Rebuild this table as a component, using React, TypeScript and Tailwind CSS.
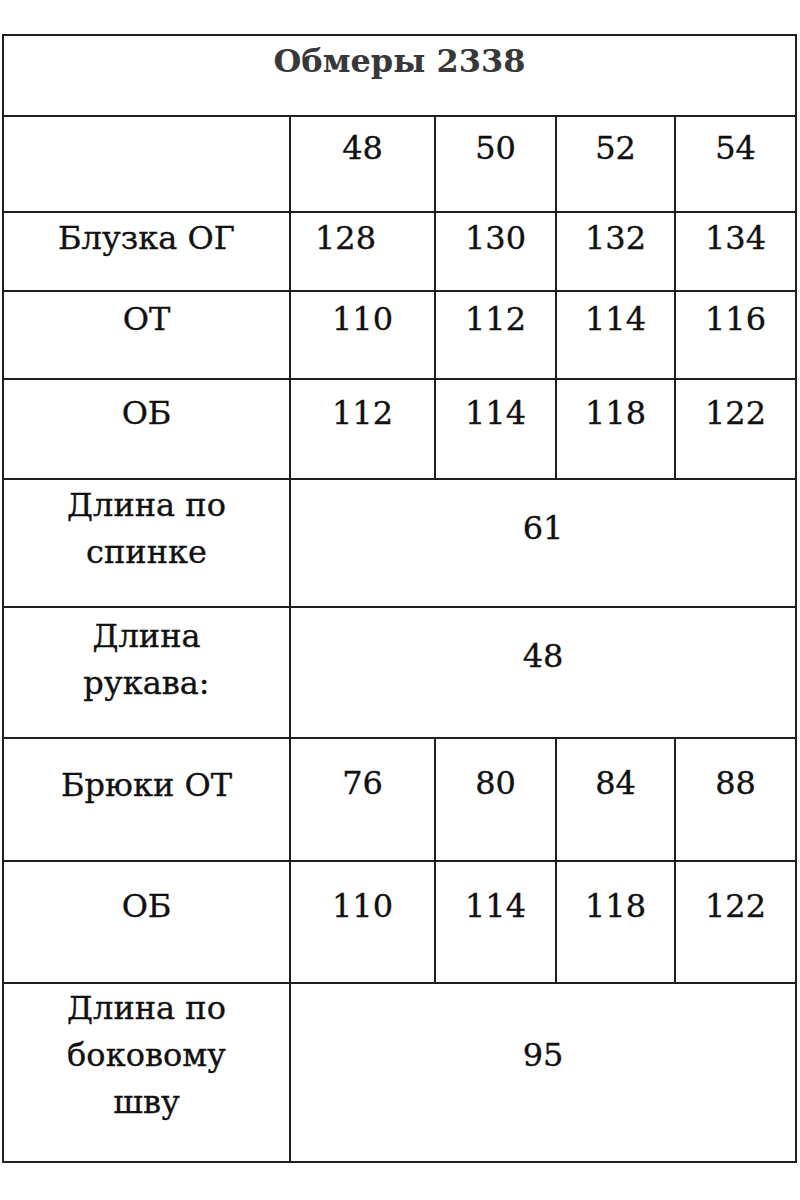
const serif = { fontFamily: '"DejaVu Serif", "Liberation Serif", serif' };

type Row = {
  label: string[];
  values: string[];
  h: string;
  labelPad: string;
  valuePad: string;
  valueClass?: string[];
};

const rows: Row[] = [
  { label: [], values: ["48", "50", "52", "54"], h: "h-[94px]", labelPad: "pt-[8px]", valuePad: "pt-[8px]" },
  { label: ["Блузка ОГ"], values: ["128", "130", "132", "134"], h: "h-[77px]", labelPad: "pt-[2px]", valuePad: "pt-[2px]", valueClass: ["pr-[34px]", "", "", ""] },
  { label: ["ОТ"], values: ["110", "112", "114", "116"], h: "h-[86px]", labelPad: "pt-[4px]", valuePad: "pt-[4px]" },
  { label: ["ОБ"], values: ["112", "114", "118", "122"], h: "h-[98px]", labelPad: "pt-[10px]", valuePad: "pt-[10px]" },
  { label: ["Длина по", "спинке"], values: ["61"], h: "h-[126px]", labelPad: "pt-[2px]", valuePad: "pt-[25px]" },
  { label: ["Длина", "рукава:"], values: ["48"], h: "h-[129px]", labelPad: "pt-[5px]", valuePad: "pt-[25px]" },
  { label: ["Брюки ОТ"], values: ["76", "80", "84", "88"], h: "h-[121px]", labelPad: "pt-[23px]", valuePad: "pt-[21px]" },
  { label: ["ОБ"], values: ["110", "114", "118", "122"], h: "h-[120px]", labelPad: "pt-[21px]", valuePad: "pt-[21px]" },
  { label: ["Длина по", "боковому", "шву"], values: ["95"], h: "h-[177px]", labelPad: "pt-[1px]", valuePad: "pt-[48px]" },
];

export default function App() {
  return (
    <div className="min-h-[1200px] w-[800px] bg-white pt-[34px] pl-[2px]" style={serif}>
      <div className="grid w-[795px] grid-cols-[285px_143px_119px_117px_119px] gap-[2px] bg-[#1f1f1f] p-[2px] text-[32px] leading-[47px] text-[#111] [-webkit-text-stroke:0.35px_#111]">
        <div className="col-span-5 flex h-[79px] justify-center bg-white pt-[5px] text-[32px] font-bold leading-[40px] text-[#383838] [-webkit-text-stroke:0px]">
          Обмеры 2338
        </div>
        {rows.map((row, i) => (
          <div key={i} className="contents">
            <div className={`flex flex-col items-center bg-white text-center ${row.h} ${row.labelPad}`}>
              {row.label.map((l) => (
                <span key={l}>{l}</span>
              ))}
            </div>
            {row.values.length === 1 ? (
              <div className={`col-span-4 flex justify-center bg-white ${row.h} ${row.valuePad}`}>{row.values[0]}</div>
            ) : (
              row.values.map((v, j) => (
                <div key={j} className={`flex justify-center bg-white ${row.h} ${row.valuePad} ${row.valueClass?.[j] ?? ""}`}>
                  {v}
                </div>
              ))
            )}
          </div>
        ))}
      </div>
    </div>
  );
}
